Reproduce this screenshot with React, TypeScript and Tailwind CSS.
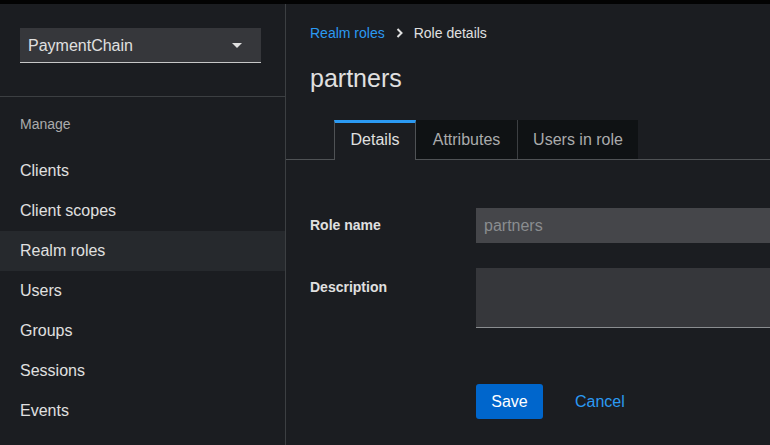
import React from "react";

const font = { fontFamily: '"Liberation Sans", Arial, sans-serif' };

function NavItem({ label, active }: { label: string; active?: boolean }) {
  return (
    <div
      className={`h-10 flex items-center pl-5 text-[16px] text-[#e0e0e0] ${
        active ? "bg-[#26292d]" : ""
      }`}
    >
      {label}
    </div>
  );
}

export default function App() {
  return (
    <div
      className="w-[770px] h-[445px] overflow-hidden bg-[#1b1d21] flex flex-col font-['Liberation_Sans',Arial,sans-serif]"
      style={font}
    >
      <div className="h-1 bg-[#030303] shrink-0" />
      <div className="flex flex-1 min-h-0">
        {/* Sidebar */}
        <aside className="w-[286px] shrink-0 border-r border-[#3c3f42] flex flex-col">
          <div className="h-[93px] border-b border-[#3c3f42] pt-6 px-5">
            <div className="w-[241px] h-[35px] bg-[#36373b] border-b border-[#c7c7c7] flex items-center justify-between pl-2 pr-[19px]">
              <span className="text-[16px] text-[#e0e0e0] pt-px">PaymentChain</span>
              <svg width="10" height="5" viewBox="0 0 10 5">
                <path d="M0 0 L10 0 L5 5 Z" fill="#e0e0e0" />
              </svg>
            </div>
          </div>
          <div className="h-[54px] flex items-center pl-5 text-[14px] text-[#aaabac]">
            Manage
          </div>
          <NavItem label="Clients" />
          <NavItem label="Client scopes" />
          <NavItem label="Realm roles" active />
          <NavItem label="Users" />
          <NavItem label="Groups" />
          <NavItem label="Sessions" />
          <NavItem label="Events" />
        </aside>

        {/* Main */}
        <main className="flex-1 min-w-0 flex flex-col">
          <div className="pl-6 pt-[19px] flex items-center text-[14px] h-[20px] box-content">
            <span className="text-[#2b9af3]">Realm roles</span>
            <svg className="mx-[11px]" width="7" height="10" viewBox="0 0 7 10">
              <path d="M1.5 1 L5.5 5 L1.5 9" stroke="#e0e0e0" strokeWidth="2" fill="none" />
            </svg>
            <span className="text-[#e0e0e0]">Role details</span>
          </div>
          <div className="pl-6 mt-[20px] h-[32px] flex items-center text-[25px] font-medium text-[#e0e0e0]">
            partners
          </div>
          {/* Tabs */}
          <div className="mt-[25px] flex h-[40px] border-b border-[#4f5255]">
            <div className="w-[48px] shrink-0" />
            <div className="relative w-[82px] flex items-center justify-center border-l border-r border-[#4f5255] border-t-[3px] border-t-[#2b9af3] pb-[3px] text-[16px] text-[#e0e0e0] -mb-px bg-[#1b1d21]">
              Details
            </div>
            <div className="w-[102px] flex items-center justify-center bg-[#0f1214] border-r border-[#3c3f42] text-[16px] text-[#aaabac]">
              Attributes
            </div>
            <div className="w-[120px] flex items-center justify-center bg-[#0f1214] text-[16px] text-[#aaabac]">
              Users in role
            </div>
          </div>
          {/* Form */}
          <div className="pl-6 pt-[48px] flex flex-col">
            <div className="flex items-center h-[35px]">
              <div className="w-[166px] text-[14px] font-bold text-[#e0e0e0]">Role name</div>
              <div className="flex-1 h-[35px] bg-[#45464a] flex items-center pl-2 text-[16px] text-[#8a8d90]">
                partners
              </div>
            </div>
            <div className="flex mt-[25px]">
              <div className="w-[166px] text-[14px] font-bold text-[#e0e0e0] pt-[9px]">
                Description
              </div>
              <div className="flex-1 h-[60px] bg-[#36373b] border-b border-[#8a8d90]" />
            </div>
            <div className="flex mt-[56px] pl-[166px] items-center">
              <div className="w-[67px] h-[35px] rounded-[3px] bg-[#0066cc] flex items-center justify-center text-[16px] text-white">
                Save
              </div>
              <div className="ml-[32px] text-[16px] text-[#2b9af3]">Cancel</div>
            </div>
          </div>
        </main>
      </div>
    </div>
  );
}
